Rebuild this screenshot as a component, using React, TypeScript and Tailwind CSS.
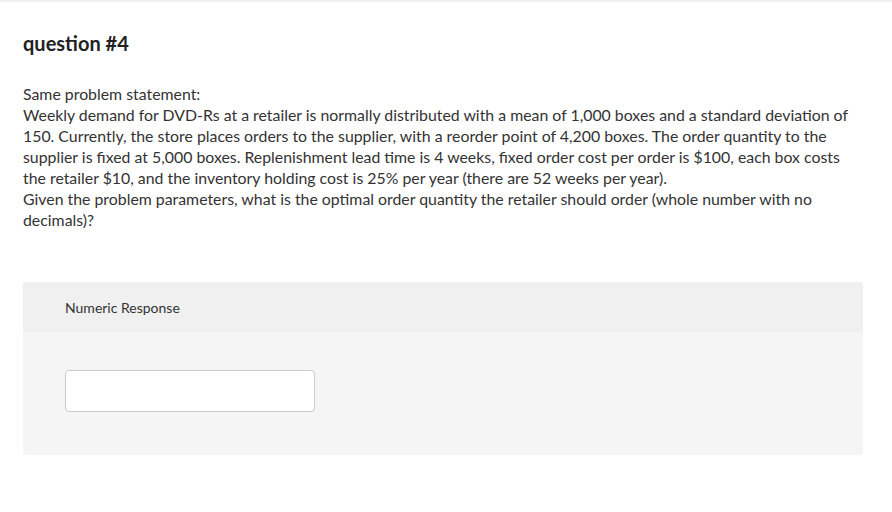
export default function App() {
  return (
    <div className="min-h-[512px] bg-white border-t-2 border-[#f0f0f0] text-[#333]" style={{ fontFamily: "Lato, 'Open Sans', sans-serif" }}>
      <div className="px-[23px] w-[886px]">
        <h2 className="pt-[29px] text-[20px] leading-[24px] font-bold text-[#222]">question #4</h2>
        <p className="mt-[28px] text-[15.85px] leading-[21px]">
          Same problem statement:
          <br />
          Weekly demand for DVD-Rs at a retailer is normally distributed with a mean of 1,000 boxes and a standard deviation of
          <br />
          150. Currently, the store places orders to the supplier, with a reorder point of 4,200 boxes. The order quantity to the
          <br />
          supplier is fixed at 5,000 boxes. Replenishment lead time is 4 weeks, fixed order cost per order is $100, each box costs
          <br />
          the retailer $10, and the inventory holding cost is 25% per year (there are 52 weeks per year).
          <br />
          Given the problem parameters, what is the optimal order quantity the retailer should order (whole number with no
          <br />
          decimals)?
        </p>
        <div className="mt-[52px] w-[840px] rounded-[3px] overflow-hidden bg-[#f5f5f5]">
          <div className="h-[50px] bg-[#f0f0f0] flex items-center px-[42px] text-[14px]">Numeric Response</div>
          <div className="px-[42px] pt-[38px] pb-[43px]">
            <input type="text" className="block w-[250px] h-[42px] bg-white border border-[#ccc] rounded-[4px] outline-none" />
          </div>
        </div>
      </div>
    </div>
  );
}
